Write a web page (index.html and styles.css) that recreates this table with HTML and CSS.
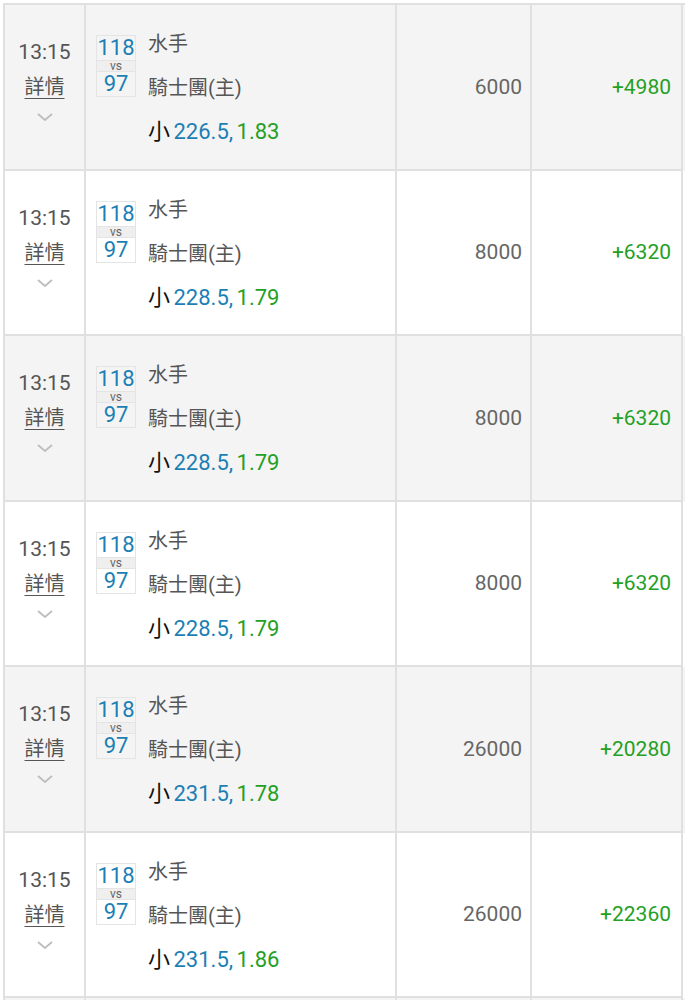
FILE: index.html
```html
<!DOCTYPE html>
<html lang="zh-Hant">
<head>
<meta charset="utf-8">
<link rel="stylesheet" href="styles.css">
</head>
<body>
<div class="list">
  <div class="row grey">
    <div class="cell time"><div class="clock">13:15</div><a class="detail">詳情</a><svg class="chev" width="16" height="8" viewBox="0 0 16 8"><path d="M1 1 L8 7 L15 1" fill="none" stroke="#bdbdbd" stroke-width="1.8"/></svg></div>
    <div class="cell match"><div class="score"><div class="s">118</div><div class="vs">vs</div><div class="s">97</div></div><div class="names"><div>水手</div><div>騎士團(主)</div><div class="odds"><span class="k">小</span> <span class="b">226.5,</span> <span class="g">1.83</span></div></div></div>
    <div class="cell stake">6000</div>
    <div class="cell win">+4980</div>
  </div>
  <div class="row">
    <div class="cell time"><div class="clock">13:15</div><a class="detail">詳情</a><svg class="chev" width="16" height="8" viewBox="0 0 16 8"><path d="M1 1 L8 7 L15 1" fill="none" stroke="#bdbdbd" stroke-width="1.8"/></svg></div>
    <div class="cell match"><div class="score"><div class="s">118</div><div class="vs">vs</div><div class="s">97</div></div><div class="names"><div>水手</div><div>騎士團(主)</div><div class="odds"><span class="k">小</span> <span class="b">228.5,</span> <span class="g">1.79</span></div></div></div>
    <div class="cell stake">8000</div>
    <div class="cell win">+6320</div>
  </div>
  <div class="row grey">
    <div class="cell time"><div class="clock">13:15</div><a class="detail">詳情</a><svg class="chev" width="16" height="8" viewBox="0 0 16 8"><path d="M1 1 L8 7 L15 1" fill="none" stroke="#bdbdbd" stroke-width="1.8"/></svg></div>
    <div class="cell match"><div class="score"><div class="s">118</div><div class="vs">vs</div><div class="s">97</div></div><div class="names"><div>水手</div><div>騎士團(主)</div><div class="odds"><span class="k">小</span> <span class="b">228.5,</span> <span class="g">1.79</span></div></div></div>
    <div class="cell stake">8000</div>
    <div class="cell win">+6320</div>
  </div>
  <div class="row">
    <div class="cell time"><div class="clock">13:15</div><a class="detail">詳情</a><svg class="chev" width="16" height="8" viewBox="0 0 16 8"><path d="M1 1 L8 7 L15 1" fill="none" stroke="#bdbdbd" stroke-width="1.8"/></svg></div>
    <div class="cell match"><div class="score"><div class="s">118</div><div class="vs">vs</div><div class="s">97</div></div><div class="names"><div>水手</div><div>騎士團(主)</div><div class="odds"><span class="k">小</span> <span class="b">228.5,</span> <span class="g">1.79</span></div></div></div>
    <div class="cell stake">8000</div>
    <div class="cell win">+6320</div>
  </div>
  <div class="row grey">
    <div class="cell time"><div class="clock">13:15</div><a class="detail">詳情</a><svg class="chev" width="16" height="8" viewBox="0 0 16 8"><path d="M1 1 L8 7 L15 1" fill="none" stroke="#bdbdbd" stroke-width="1.8"/></svg></div>
    <div class="cell match"><div class="score"><div class="s">118</div><div class="vs">vs</div><div class="s">97</div></div><div class="names"><div>水手</div><div>騎士團(主)</div><div class="odds"><span class="k">小</span> <span class="b">231.5,</span> <span class="g">1.78</span></div></div></div>
    <div class="cell stake">26000</div>
    <div class="cell win">+20280</div>
  </div>
  <div class="row">
    <div class="cell time"><div class="clock">13:15</div><a class="detail">詳情</a><svg class="chev" width="16" height="8" viewBox="0 0 16 8"><path d="M1 1 L8 7 L15 1" fill="none" stroke="#bdbdbd" stroke-width="1.8"/></svg></div>
    <div class="cell match"><div class="score"><div class="s">118</div><div class="vs">vs</div><div class="s">97</div></div><div class="names"><div>水手</div><div>騎士團(主)</div><div class="odds"><span class="k">小</span> <span class="b">231.5,</span> <span class="g">1.86</span></div></div></div>
    <div class="cell stake">26000</div>
    <div class="cell win">+22360</div>
  </div>
  <div class="row grey tail">
    <div class="cell"></div><div class="cell"></div><div class="cell"></div><div class="cell"></div>
  </div>
</div>
</body>
</html>
```
FILE: styles.css
```css
html, body {
  margin: 0;
  padding: 0;
  background: #ffffff;
}
body {
  font-family: Roboto, "Noto Sans CJK TC", sans-serif;
  color: #555555;
  overflow: hidden;
  height: 1000px;
}
.list {
  margin: 3px 0 0 3px;
  width: 680px;
  border-left: 2px solid #e0e0e0;
  border-top: 2px solid #e0e0e0;
}
.row {
  display: grid;
  grid-template-columns: 81px 311px 135px 151px;
  height: 165.5px;
  background: #ffffff;
}
.row.grey {
  background: #f4f4f4;
}
.row.tail {
  height: 2px;
}
.tail .cell {
  border-bottom: 0;
}
.cell {
  box-sizing: border-box;
  border-right: 2px solid #e0e0e0;
  border-bottom: 2px solid #e0e0e0;
}
.time {
  display: flex;
  flex-direction: column;
  align-items: center;
  padding-top: 35px;
}
.clock {
  font-size: 21px;
  line-height: 24px;
  color: #555;
}
.detail {
  margin-top: 9px;
  font-size: 20px;
  line-height: 28px;
  color: #555;
  text-decoration: underline;
  text-underline-offset: 4px;
  text-decoration-thickness: 1px;
}
.chev {
  margin-top: 12px;
  display: block;
}
.match {
  display: flex;
  padding: 17px 0 0 10px;
}
.score {
  margin-top: 13px;
  width: 40px;
  height: 62px;
  box-sizing: border-box;
  border: 1px solid #e4e4e4;
  display: flex;
  flex-direction: column;
  align-items: center;
  color: #1b7fb5;
}
.score .s {
  font-size: 22px;
  line-height: 24px;
  height: 24px;
  width: 100%;
  text-align: center;
}
.score .vs {
  width: 100%;
  height: 10px;
  line-height: 10px;
  font-size: 12px;
  text-align: center;
  color: #666;
  background: #efefef;
  border-top: 1px solid #e4e4e4;
  border-bottom: 1px solid #e4e4e4;
  box-sizing: content-box;
}
.names {
  margin-left: 12px;
  font-size: 20px;
  line-height: 44px;
  color: #555;
}
.odds {
  font-size: 22px;
  word-spacing: -2px;
}
.odds .k { color: #111; }
.odds .b { color: #1b7fb5; }
.odds .g { color: #24a024; }
.stake, .win {
  display: flex;
  align-items: center;
  justify-content: flex-end;
  font-size: 21px;
}
.stake {
  padding-right: 8px;
  color: #666;
}
.win {
  padding-right: 10px;
  color: #24a024;
}
```
